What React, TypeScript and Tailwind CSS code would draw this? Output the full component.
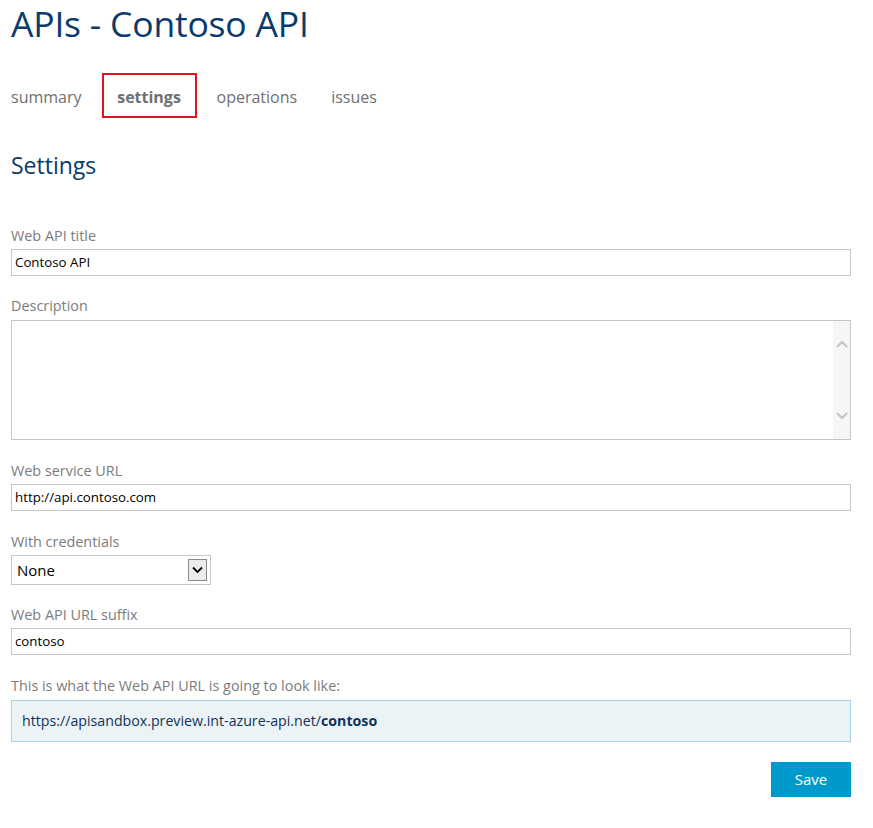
import React from 'react';

const font = { fontFamily: '"Open Sans", "Noto Sans", sans-serif' };

function Label({ children }: { children: React.ReactNode }) {
  return <div className="text-[14.4px] leading-[20px] text-[#7c7c7c]">{children}</div>;
}

function TextInput({ value }: { value: string }) {
  return (
    <div className="mt-[3px] h-[27px] border border-[#c6c6c6] bg-white px-[3px] flex items-center text-[13.3px] text-black">
      {value}
    </div>
  );
}

export default function App() {
  return (
    <div className="min-h-screen bg-white pl-[11px] pr-[22px]" style={font}>
      {/* Page title */}
      <h1 className="pt-[1px] text-[35.5px] leading-[44px] text-[#0b3a6b] tracking-[-0.2px]">APIs - Contoso API</h1>

      {/* Tabs */}
      <div className="mt-[28px] flex items-center text-[16px] text-[#707070]">
        <div className="h-[45px] pt-[3px] flex items-center">summary</div>
        <div className="ml-[20px] w-[95px] h-[45px] pt-[3px] border-2 border-[#e0141e] flex items-center justify-center font-bold">
          settings
        </div>
        <div className="ml-[20px] h-[45px] pt-[3px] flex items-center">operations</div>
        <div className="ml-[34px] h-[45px] pt-[3px] flex items-center">issues</div>
      </div>

      {/* Section heading */}
      <h2 className="mt-[32px] text-[23px] leading-[30px] text-[#0b3a6b]">Settings</h2>

      <div className="mt-[46px]">
        <Label>Web API title</Label>
        <TextInput value="Contoso API" />
      </div>

      <div className="mt-[20px]">
        <Label>Description</Label>
        <div className="mt-[4px] h-[120px] border border-[#c6c6c6] bg-white flex">
          <div className="flex-1" />
          <div className="w-[17px] bg-[#f6f6f6] flex flex-col items-center justify-between py-[19px] text-[#c4c4c4]">
            <svg width="12" height="8" viewBox="0 0 12 8" fill="none" stroke="currentColor" strokeWidth="2">
              <path d="M1 7 L6 2 L11 7" />
            </svg>
            <svg width="12" height="8" viewBox="0 0 12 8" fill="none" stroke="currentColor" strokeWidth="2">
              <path d="M1 1 L6 6 L11 1" />
            </svg>
          </div>
        </div>
      </div>

      <div className="mt-[21px]">
        <Label>Web service URL</Label>
        <TextInput value="http://api.contoso.com" />
      </div>

      <div className="mt-[21px]">
        <Label>With credentials</Label>
        <div className="mt-[3px] w-[200px] h-[30px] border border-[#c6c6c6] bg-white flex items-center justify-between pl-[5px] pr-[3px]">
          <span className="text-[15px] text-black">None</span>
          <div className="w-[19px] h-[22px] border border-[#8a8a8a] bg-[#ececec] flex items-center justify-center">
            <svg width="11" height="8" viewBox="0 0 11 8" fill="none" stroke="#000" strokeWidth="1.8">
              <path d="M1 1.5 L5.5 6 L10 1.5" />
            </svg>
          </div>
        </div>
      </div>

      <div className="mt-[20px]">
        <Label>Web API URL suffix</Label>
        <TextInput value="contoso" />
      </div>

      <div className="mt-[21px]">
        <Label>This is what the Web API URL is going to look like:</Label>
        <div className="mt-[4px] h-[42px] border border-[#a9d2e5] bg-[#ebf3f7] flex items-center pl-[10px] text-[14.2px] text-[#0f3458]">
          https://apisandbox.preview.int-azure-api.net/<span className="font-bold">contoso</span>
        </div>
      </div>

      <div className="mt-[20px] flex justify-end">
        <button className="w-[80px] h-[35px] bg-[#0099cc] text-white text-[15px]">Save</button>
      </div>
    </div>
  );
}
